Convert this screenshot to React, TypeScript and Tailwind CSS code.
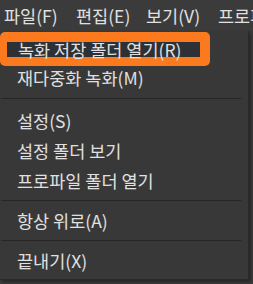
export default function App() {
  const bar = [
    { t: "파일(F)", w: "w-[72px]" },
    { t: "편집(E)", w: "w-[70px]" },
    { t: "보기(V)", w: "w-[72px]" },
    { t: "프로파일(P)", w: "w-[100px]" },
  ];

  return (
    <div
      className="relative w-[253px] h-[284px] overflow-hidden bg-[#3b3b3b] text-[#e0e0e0] text-[17.5px]"
      style={{ fontFamily: '"Noto Sans CJK KR", "Noto Sans", sans-serif' }}
    >
      {/* menu bar */}
      <div className="flex h-[31px] items-center pl-[4px] whitespace-nowrap leading-none">
        {bar.map((b) => (
          <span key={b.t} className={`${b.w} shrink-0`}>
            {b.t}
          </span>
        ))}
      </div>

      {/* dropdown */}
      <div className="w-[249px] h-[249px] border-r border-b border-[#2a2a2a] bg-[#383838] pt-[5px] shadow-[2px_2px_3px_rgba(0,0,0,0.35)] leading-none">
        <div className="relative h-[28px]">
          <div className="absolute left-0 -top-[4px] w-[210px] h-[34px] rounded-[5px] bg-[#fc7a1e] pl-[7px] pr-[10px] pt-[10px] pb-[9px]">
            <div className="flex h-full items-center bg-[#2d3135] pl-[11px] whitespace-nowrap">
              녹화 저장 폴더 열기(R)
            </div>
          </div>
        </div>
        <Item h="h-[27px]">재다중화 녹화(M)</Item>
        <div className="pt-[7px] pb-[7px]">
          <div className="h-px w-[240px] ml-px bg-[#262626]" />
        </div>
        <Item>설정(S)</Item>
        <Item>설정 폴더 보기</Item>
        <Item>프로파일 폴더 열기</Item>
        <Sep />
        <Item>항상 위로(A)</Item>
        <Sep />
        <Item>끝내기(X)</Item>
      </div>
    </div>
  );
}

function Item({ children, h = "h-[30px]" }: { children: React.ReactNode; h?: string }) {
  return (
    <div className={`flex ${h} items-center pl-[17px] whitespace-nowrap`}>
      {children}
    </div>
  );
}

function Sep() {
  return (
    <div className="pt-[4px] pb-[5px]">
      <div className="h-px w-[240px] ml-px bg-[#262626]" />
    </div>
  );
}
